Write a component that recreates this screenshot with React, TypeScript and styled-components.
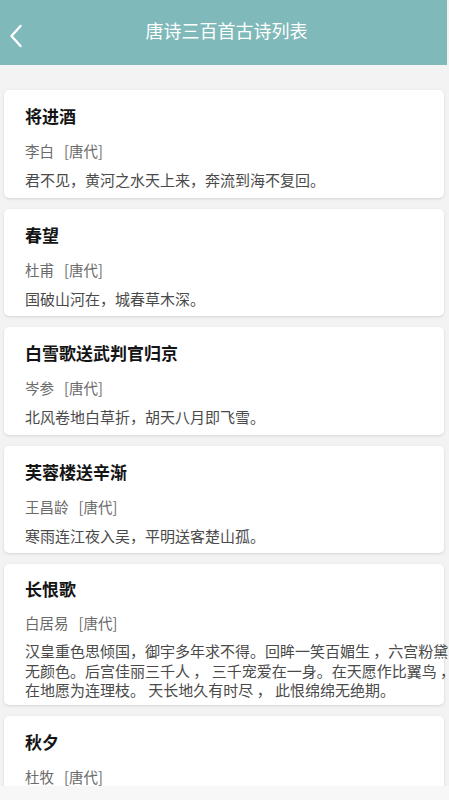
import React from 'react';
import styled, { createGlobalStyle } from 'styled-components';

interface IPoem {
  title: string;
  author: string;
  dynasty: string;
  lines: string[];
}

const poems: IPoem[] = [
  {
    title: '将进酒',
    author: '李白',
    dynasty: '唐代',
    lines: ['君不见，黄河之水天上来，奔流到海不复回。'],
  },
  {
    title: '春望',
    author: '杜甫',
    dynasty: '唐代',
    lines: ['国破山河在，城春草木深。'],
  },
  {
    title: '白雪歌送武判官归京',
    author: '岑参',
    dynasty: '唐代',
    lines: ['北风卷地白草折，胡天八月即飞雪。'],
  },
  {
    title: '芙蓉楼送辛渐',
    author: '王昌龄',
    dynasty: '唐代',
    lines: ['寒雨连江夜入吴，平明送客楚山孤。'],
  },
  {
    title: '长恨歌',
    author: '白居易',
    dynasty: '唐代',
    lines: [
      '汉皇重色思倾国，御宇多年求不得。回眸一笑百媚生 ，六宫粉黛',
      '无颜色。后宫佳丽三千人 ， 三千宠爱在一身。在天愿作比翼鸟 ，',
      '在地愿为连理枝。 天长地久有时尽 ， 此恨绵绵无绝期。',
    ],
  },
  {
    title: '秋夕',
    author: '杜牧',
    dynasty: '唐代',
    lines: ['银烛秋光冷画屏，轻罗小扇扑流萤。'],
  },
];

const GlobalStyle = createGlobalStyle`
  html, body {
    margin: 0;
    padding: 0;
    background: #f3f3f3;
  }
  body {
    font-family: 'Noto Sans CJK SC', 'Noto Sans', sans-serif;
  }
`;

const IconBack = () => (
  <svg width='14' height='24' viewBox='0 0 14 24' fill='none'>
    <path
      d='M11.5 2 L2.5 12 L11.5 22'
      stroke='#ffffff'
      strokeWidth='2.4'
      strokeLinecap='round'
      strokeLinejoin='round'
    />
  </svg>
);

const PoemCard = (props: { poem: IPoem }) => {
  const { poem } = props;
  const multi = poem.lines.length > 1;
  return (
    <StyledCard $multi={multi}>
      <div className='title'>{poem.title}</div>
      <div className='author'>
        <span>{poem.author}</span>
        <span className='dynasty'>[{poem.dynasty}]</span>
      </div>
      <div className='content'>
        {poem.lines.map((line, i) => (
          <p key={i}>{line}</p>
        ))}
      </div>
    </StyledCard>
  );
};

export default function App() {
  return (
    <StyledPage>
      <GlobalStyle />
      <StyledHeader>
        <button className='back'>
          <IconBack />
        </button>
        <h1>唐诗三百首古诗列表</h1>
      </StyledHeader>
      <StyledList>
        {poems.map((p) => (
          <PoemCard key={p.title} poem={p} />
        ))}
      </StyledList>
      <StyledFooter />
    </StyledPage>
  );
}

const StyledPage = styled.div`
  display: flex;
  flex-direction: column;
  width: 449px;
  height: 800px;
  overflow: hidden;
  background: #f3f3f3;
`;

const StyledHeader = styled.div`
  position: relative;
  flex: 0 0 65px;
  display: flex;
  align-items: center;
  justify-content: center;
  margin-right: 2px;
  background: #80b9b9;

  .back {
    position: absolute;
    left: 9px;
    top: 24px;
    padding: 0;
    border: none;
    background: none;
    display: flex;
  }
  h1 {
    margin: 0 0 6px 6px;
    font-weight: 400;
    font-size: 18px;
    line-height: 24px;
    color: #ffffff;
  }
`;

const StyledList = styled.div`
  flex: 1;
  overflow: hidden;
  display: flex;
  flex-direction: column;
  gap: 11px;
  padding: 25px 5px 0 4px;
`;

const StyledFooter = styled.div`
  flex: 0 0 14px;
  background: #f7f7f7;
`;

const StyledCard = styled.div<{ $multi: boolean }>`
  flex-shrink: 0;
  padding: ${(p) => (p.$multi ? '13px 0 5px 21px' : '14px 0 8px 21px')};
  background: #ffffff;
  border-radius: 5px;
  box-shadow: 0 1px 3px rgba(0, 0, 0, 0.13);

  .title {
    font-weight: 700;
    font-size: 17px;
    line-height: 24px;
    color: #141414;
  }
  .author {
    margin-top: ${(p) => (p.$multi ? '12px' : '13px')};
    font-size: 14.5px;
    line-height: 20px;
    color: #6b6b6b;
    .dynasty {
      margin-left: 10px;
    }
  }
  .content {
    margin-top: ${(p) => (p.$multi ? '8px' : '9px')};
    p {
      margin: 0;
      white-space: nowrap;
      font-size: 15px;
      line-height: 19.5px;
      color: #4a4a4a;
    }
  }
`;
